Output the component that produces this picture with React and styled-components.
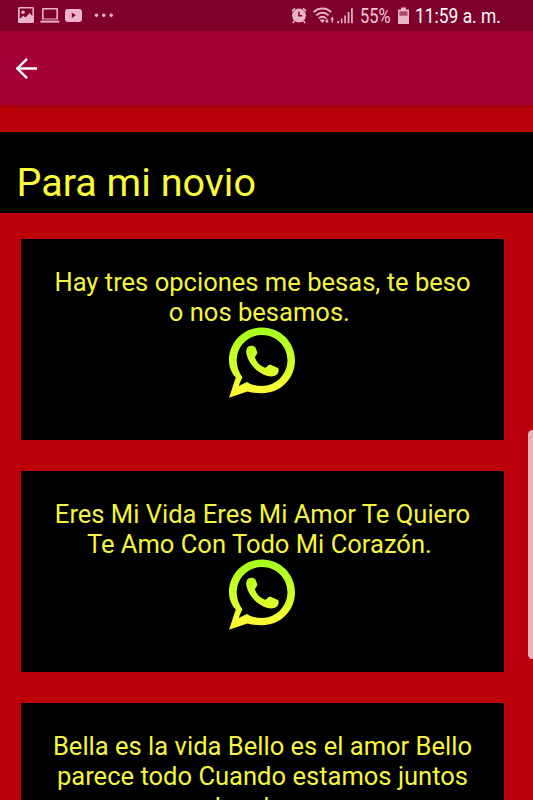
import React from "react";
import styled, { createGlobalStyle } from "styled-components";

const GlobalStyle = createGlobalStyle`
  * {
    box-sizing: border-box;
  }

  body {
    margin: 0;
    background: #bb000c;
    font-family: Roboto, "Liberation Sans", sans-serif;
  }
`;

const Screen = styled.div`
  position: relative;
  height: 800px;
  overflow: hidden;
  display: flex;
  flex-direction: column;
  background: #bb000c;
`;

const StatusBar = styled.header`
  flex: none;
  height: 31px;
  padding: 0 33px 0 17px;
  display: flex;
  justify-content: space-between;
  align-items: center;
  background: #7f002b;
  color: #e9b4c9;
`;

const StatusGroup = styled.div`
  display: flex;
  align-items: center;
  height: 31px;

  svg {
    display: block;
    flex: none;
  }
`;

const StatusText = styled.span`
  display: block;
  flex: none;
  width: ${({ $width }) => $width}px;
  margin-left: ${({ $gap }) => $gap}px;
  color: ${({ $color }) => $color};
  font-size: 20px;
  line-height: 31px;
  padding-top: 2px;
  white-space: nowrap;
  transform: scaleX(${({ $squeeze }) => $squeeze});
  transform-origin: left center;
`;

const AppBar = styled.nav`
  position: relative;
  flex: none;
  height: 74px;
  padding: 0 15px;
  display: flex;
  align-items: center;
  background: #a20037;
  box-shadow: 0 1px 4px rgba(90, 0, 0, 0.5);
`;

const BackButton = styled.button`
  padding: 0;
  border: 0;
  background: none;
  display: flex;
  color: #fff;
`;

const TitleBand = styled.div`
  flex: none;
  height: 81px;
  margin-top: 27px;
  padding: 27px 16.5px 0;
  background: #000;
`;

const Title = styled.h1`
  margin: 0;
  color: #fbfb37;
  font-size: 39.5px;
  font-weight: 400;
  line-height: 48px;
`;

const PhraseList = styled.main`
  padding: 26px 29px 0 21px;
  display: flex;
  flex-direction: column;
  gap: 30.6px;
`;

const PhraseCard = styled.article`
  flex: none;
  height: 201.4px;
  padding-top: 28px;
  display: flex;
  flex-direction: column;
  align-items: center;
  background: #000;

  svg {
    margin: -2px 2px 0 0;
  }
`;

const Phrase = styled.p`
  margin: 0;
  color: #f5f53c;
  font-size: 25.55px;
  line-height: 30.3px;
  text-align: center;
  white-space: pre-line;
`;

const ScrollThumb = styled.div`
  position: absolute;
  top: 430px;
  right: -4px;
  width: 9px;
  height: 229px;
  border-radius: 5px;
  background: #e9b0b5;
`;

// the closing line of each phrase keeps its trailing space
const phrases = [
  "Hay tres opciones me besas, te beso\no nos besamos.\u00a0",
  "Eres Mi Vida Eres Mi Amor Te Quiero\nTe Amo Con Todo Mi Corazón.\u00a0",
  "Bella es la vida Bello es el amor Bello\nparece todo Cuando estamos juntos\nlos dos.\u00a0",
];

const NotificationIcons = () => (
  <svg width="98" height="31" viewBox="17 0 98 31" fill="currentColor">
    <path
      fillRule="evenodd"
      d="M19.5 7h13a1.500 1.500 0 0 1 1.500 1.500v13a1.500 1.500 0 0 1-1.500 1.500h-13a1.500 1.500 0 0 1-1.500-1.500v-13A1.500 1.500 0 0 1 19.500 7zM19.700 8.600v10.200l3.600-3.100 2.200 1.700 4.200-4.400 2.700 3V8.600z"
    />
    <circle cx="23" cy="12.2" r="1.8" />
    <path fillRule="evenodd" d="M43 8h14a1 1 0 0 1 1 1v10.500H42V9a1 1 0 0 1 1-1zm.6 1.600v8.800h12.800V9.600z" />
    <path d="M40.500 20.600h18.800v2h-18.800z" />
    <path
      fillRule="evenodd"
      d="M68 9h11c2.200 0 3 1 3 3v7c0 2-.8 3-3 3H68c-2.200 0-3-1-3-3v-7c0-2 .8-3 3-3zm3.800 3.600v5.400l4-2.700z"
    />
    <circle cx="96.500" cy="15.300" r="1.700" />
    <circle cx="103.800" cy="15.300" r="1.700" />
    <circle cx="111.200" cy="15.300" r="1.700" />
  </svg>
);

const SignalIcons = () => (
  <svg width="64" height="31" viewBox="291 0 64 31" fill="currentColor">
    {/* alarm */}
    <path
      fillRule="evenodd"
      d="M299 8.600a7 7 0 1 1 0 14 7 7 0 0 1 0-14zm-.8 3.200v4.700h4v-1.400h-2.500v-3.300z"
    />
    <path
      d="M291.900 11.200l3.200-2.900M306.100 11.200l-3.200-2.900M294.500 21l-1.700 2M303.500 21l1.700 2"
      stroke="currentColor"
      strokeWidth="1.700"
    />
    {/* wifi */}
    <g fill="none" stroke="currentColor" strokeWidth="1.900">
      <path d="M313.600 12.200c4.800-4.900 12.800-4.900 17.600 0" />
      <path d="M316.200 15.300c3.400-3.400 9-3.400 12.400 0" />
      <path d="M318.900 18.300c1.900-2 5.100-2 7 0" />
    </g>
    <path d="M319.900 20.200c1.400-1.200 3.600-1.200 5 0l-2.500 2.800z" />
    <path d="M326.200 18.500h1.400v2.200h1.300l-2 2.600-2-2.600h1.300zM331.500 22.500h1.400v-3h1.300l-2-2.800-2 2.800h1.300z" />
    {/* signal */}
    <path d="M337.300 21h1.800v2.300h-1.800zM340.900 18.500h1.600v4.800h-1.600zM344.300 15.500h1.600v7.800h-1.600zM347.700 12h1.700v11.300h-1.700zM351.100 8.300h1.700v15h-1.700z" />
  </svg>
);

const BatteryIcon = () => (
  <svg width="11" height="31" viewBox="398 0 11 31" fill="currentColor">
    <path fillRule="evenodd" d="M401 7.500h5v2h3V24h-11V9.500h3zm-1.400 4v4h7.800v-4z" />
    <path d="M399.600 11.500h7.800v4h-7.800z" opacity=".4" />
  </svg>
);

const BackIcon = () => (
  <svg width="23" height="23" viewBox="0 0 23 23" fill="none" stroke="currentColor" strokeWidth="2.4">
    <path d="M22 11.500H2.500M12 1.800L2.300 11.500l9.700 9.700" />
  </svg>
);

const WhatsAppIcon = ({ id }) => (
  <svg width="68" height="72" viewBox="228 326 68 72">
    <defs>
      <linearGradient id={id} x1="0" y1="327" x2="0" y2="397" gradientUnits="userSpaceOnUse">
        <stop offset="0" stopColor="#a6ff1c" />
        <stop offset=".5" stopColor="#ccff25" />
        <stop offset=".85" stopColor="#f8ff32" />
        <stop offset="1" stopColor="#ffee2c" />
      </linearGradient>
    </defs>
    <g fill={`url(#${id})`}>
      <path
        fillRule="evenodd"
        d="M262 327.500c18.300 0 33 14.500 33 32.800s-14.700 33-33 33c-5.200 0-10.200-.6-14.500-1.800L229 397.700l6.800-20.200c-4.600-4.600-6.800-11-6.800-17.200 0-18.300 14.700-32.800 33-32.800zm0 7.500c-14 0-25.300 11.200-25.300 25.200 0 6.800 2.200 12.300 5.700 17l-3.800 8.900 8.400-4.200c4.200 2.700 9.500 4 15 4 14.100 0 25.400-11.500 25.400-25.700S276.100 335 262 335z"
      />
      <path d="M247 348c1.500-2.800 6.700-3 8.500-.4l1.800 4.800c.2 2.200-2.600 3.600-2.300 5.400 1.600 4.600 5 7.800 9.300 9.800 2.200 1 3.600-3 5.700-3l8 3.500c1.300 1 .5 5.300-1 6.500-2.500 2-6 2.500-9.300 1.500-9-2.600-16.800-9.700-20.200-18.600-1.400-3.700-2-6.800-.5-9.500z" />
    </g>
  </svg>
);

const App = () => (
  <>
    <GlobalStyle />
    <Screen>
      <StatusBar>
        <StatusGroup>
          <NotificationIcons />
        </StatusGroup>
        <StatusGroup>
          <SignalIcons />
          <StatusText $width={38} $gap={5} $color="#efcbd8" $squeeze={0.82}>
            55%
          </StatusText>
          <BatteryIcon />
          <StatusText $width={85} $gap={6} $color="#fff" $squeeze={0.87}>
            11:59 a. m.
          </StatusText>
        </StatusGroup>
      </StatusBar>
      <AppBar>
        <BackButton aria-label="Volver">
          <BackIcon />
        </BackButton>
      </AppBar>
      <TitleBand>
        <Title>Para mi novio</Title>
      </TitleBand>
      <PhraseList>
        {phrases.map((phrase, index) => (
          <PhraseCard key={phrase}>
            <Phrase>{phrase}</Phrase>
            <WhatsAppIcon id={`bubble-${index}`} />
          </PhraseCard>
        ))}
      </PhraseList>
      <ScrollThumb />
    </Screen>
  </>
);

export default App;
